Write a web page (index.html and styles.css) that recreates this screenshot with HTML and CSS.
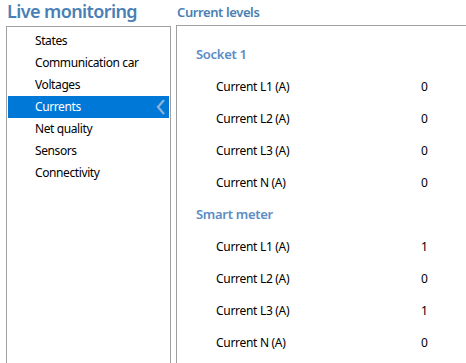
FILE: index.html
```html
<!DOCTYPE html>
<html>
<head>
<meta charset="utf-8">
<link rel="stylesheet" href="styles.css">
</head>
<body>
<div class="app">
  <div class="left">
    <div class="title">Live monitoring</div>
    <ul class="nav">
      <li class="item">States</li>
      <li class="item">Communication car</li>
      <li class="item">Voltages</li>
      <li class="item selected">Currents
        <svg class="chev" width="10" height="16" viewBox="0 0 10 16"><path d="M8 1 L2 8 L8 15" fill="none" stroke="#8fb3d6" stroke-width="2.2"/></svg>
      </li>
      <li class="item">Net quality</li>
      <li class="item">Sensors</li>
      <li class="item">Connectivity</li>
    </ul>
  </div>
  <div class="right">
    <div class="subtitle">Current levels</div>
    <div class="panel">
      <div class="group">Socket 1</div>
      <div class="row"><span class="label">Current L1 (A)</span><span class="val">0</span></div>
      <div class="row"><span class="label">Current L2 (A)</span><span class="val">0</span></div>
      <div class="row"><span class="label">Current L3 (A)</span><span class="val">0</span></div>
      <div class="row"><span class="label">Current N (A)</span><span class="val">0</span></div>
      <div class="group">Smart meter</div>
      <div class="row"><span class="label">Current L1 (A)</span><span class="val">1</span></div>
      <div class="row"><span class="label">Current L2 (A)</span><span class="val">0</span></div>
      <div class="row"><span class="label">Current L3 (A)</span><span class="val">1</span></div>
      <div class="row"><span class="label">Current N (A)</span><span class="val">0</span></div>
    </div>
  </div>
</div>
</body>
</html>
```
FILE: styles.css
```css
* { box-sizing: border-box; }
html, body { margin: 0; padding: 0; background: #fff; overflow: hidden; }
body { font-family: "Noto Sans", "Open Sans", sans-serif; color: #000; }
.app { display: flex; height: 363px; padding-left: 6px; }
.left { width: 165px; display: flex; flex-direction: column; }
.title { height: 26px; font-size: 18px; font-weight: 600; color: #4a7fb5; line-height: 22px; padding-left: 1px; letter-spacing: -0.6px; }
.nav { list-style: none; margin: 0; padding: 3px 1px 0 1px; flex: 1; border: 1px solid #a0a0a0; border-bottom: none; }
.item { height: 22px; line-height: 22px; font-size: 12px; padding-left: 27px; position: relative; letter-spacing: -0.4px; }
.item.selected { background: #0078d7; color: #fff; }
.chev { position: absolute; right: 3px; top: 3px; }
.right { flex: 1; display: flex; flex-direction: column; margin-left: 5px; }
.subtitle { height: 26px; font-size: 13px; font-weight: 600; color: #4a7fb5; line-height: 24px; padding-left: 1px; letter-spacing: -0.4px; }
.panel { flex: 1; border-top: 1px solid #a0a0a0; border-left: 1px solid #a0a0a0; padding: 17px 0 0 19px; }
.group { height: 22px; line-height: 22px; font-size: 13px; font-weight: 600; color: #5b8cc4; margin-bottom: 10px; letter-spacing: -0.3px; }
.row { height: 32px; line-height: 24px; font-size: 12px; display: flex; padding-left: 20px; }
.label { width: 205px; letter-spacing: -0.3px; }
.val { color: #000; }
```
